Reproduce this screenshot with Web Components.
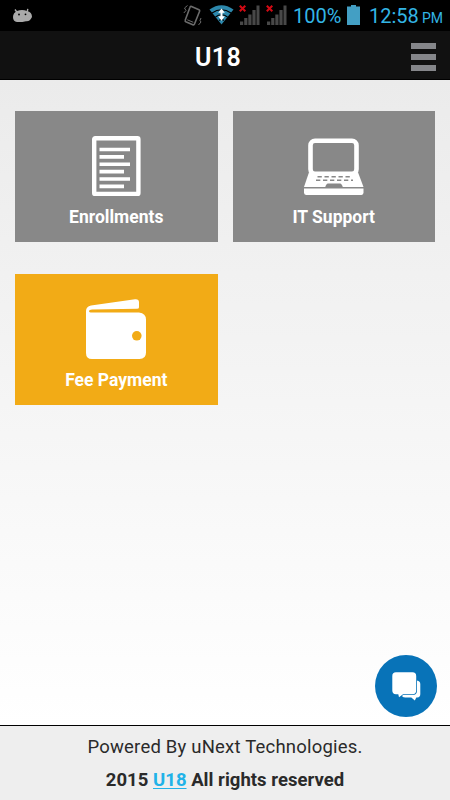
<!DOCTYPE html>
<html lang="en">
<head>
<meta charset="UTF-8">
<meta name="viewport" content="width=device-width, initial-scale=1.0">
<title>U18</title>
<style>
    body {
        margin: 0;
        font-family: Roboto, "Liberation Sans", sans-serif;
    }
</style>
</head>
<body>
<u18-app>
    <status-bar slot="top"></status-bar>
    <app-header slot="top">U18</app-header>
    <menu-tile>
        <svg slot="icon" width="62" height="62" viewBox="0 0 62 62" fill="none" stroke="#fff">
            <rect x="9.200" y="3.300" width="44.200" height="55.600" rx="1" stroke-width="4.400"/>
            <path stroke-width="3.600" d="M14.500 14.500h30.500M14.500 21.900h24.500M14.500 29.200h30.500M14.500 36.600h24.500M14.500 44h30.500M14.500 51.400h24.500"/>
        </svg>
        Enrollments
    </menu-tile>
    <menu-tile>
        <svg slot="icon" width="62" height="62" viewBox="0 0 62 62" fill="#fff">
            <rect x="7.500" y="5.800" width="46" height="33" rx="4.500" fill="none" stroke="#fff" stroke-width="4.600"/>
            <path d="M6 37.200h49L60.500 52H1z"/>
            <path d="M1 53.600h59.500v4q0 2.400-2 2.400H3q-2 0-2-2.400z"/>
            <path stroke="#888" stroke-width="1.500" stroke-dasharray="4.300 2.700" d="M14.500 41.700h33M13 45.200h37"/>
            <path fill="#888" d="M25 48.600h12q2 0 3 4.500H22q1-4.500 3-4.500z"/>
        </svg>
        IT Support
    </menu-tile>
    <menu-tile color="#f2ab16">
        <svg slot="icon" width="62" height="62" viewBox="0 0 62 62" fill="#fff">
            <path d="M1 16V13q0-4.500 5-5.600L50 1.200q4-.4 4 3v5q0 1.600-2 1.600L7 11.500q-3 .2-3 1.500 0 1.600 3 1.600h47q7 1 7 7V54.500q0 6.500-6.500 6.500H7Q1 61 1 55z"/>
            <circle cx="51.800" cy="37.800" r="4.800" fill="#f2ab16"/>
        </svg>
        Fee Payment
    </menu-tile>
    <chat-button slot="float"></chat-button>
    <app-footer slot="bottom" company="uNext Technologies">U18</app-footer>
</u18-app>

<script>
class U18App extends HTMLElement {
    constructor() {
        super();
        this.attachShadow({ mode: 'open' });
    }

    connectedCallback() {
        this.shadowRoot.innerHTML = `
            <style>
                :host {
                    display: flex;
                    flex-direction: column;
                    position: relative;
                    width: 450px;
                    height: 800px;
                    overflow: hidden;
                    background: #fff;
                }
                main {
                    flex: 1;
                    box-sizing: border-box;
                    padding: 31px 15px;
                    display: grid;
                    grid-template-columns: 202.500px 202.500px;
                    grid-auto-rows: 131px;
                    gap: 32px 15px;
                    align-content: start;
                    background: linear-gradient(#ebebeb, #fff);
                }
            </style>
            <slot name="top"></slot>
            <main><slot></slot></main>
            <slot name="float"></slot>
            <slot name="bottom"></slot>
        `;
    }
}

class StatusBar extends HTMLElement {
    constructor() {
        super();
        this.attachShadow({ mode: 'open' });
    }

    connectedCallback() {
        const signal = `
            <svg width="21" height="22" viewBox="0 0 21 22">
                <path fill="#484848" d="M1 17.500h3.200V21H1zM5.200 14h3.200v7H5.200zM9.300 10.500h3.200V21H9.300zM13.400 6h3.200v15h-3.200zM17.500 1.500H20.500V21h-3z"/>
                <path stroke="#d20a14" stroke-width="2" d="M.8 1.800l5.500 5.500M6.300 1.800L.8 7.300"/>
            </svg>`;
        this.shadowRoot.innerHTML = `
            <style>
                :host {
                    display: flex;
                    align-items: flex-start;
                    height: 31px;
                    box-sizing: border-box;
                    padding: 4px 8px 0 12px;
                    background: #000;
                    color: #33b5e5;
                    line-height: 25px;
                    white-space: nowrap;
                }
                svg { display: block; flex: none; }
                .robot { margin: 4px auto 0 0; }
                .vibrate { margin-right: 7px; }
                .wifi { margin-right: 5px; }
                .signals { display: flex; gap: 6px; margin-right: 6px; }
                .percent { width: 54px; font-size: 20px; }
                .battery { margin: 1px 9px 0 0; }
                .time { width: 53px; font-size: 20px; }
                .ampm { width: 20px; font-size: 14px; line-height: 28px; }
            </style>
            <svg class="robot" width="21" height="15" viewBox="0 0 21 15">
                <path fill="#aaa" d="M5 3Q10 .8 15 3Q20 4 20 9Q18 13.700 14 13.200Q9 14.400 5 14Q1 13.500 1 9Q1 5 5 3z"/>
                <path stroke="#aaa" stroke-width="1.400" d="M3 1.500L5.500 5M15.800.8L15.200 4"/>
                <circle cx="7" cy="6.500" r=".9"/><circle cx="13.500" cy="6.300" r=".9"/>
            </svg>
            <svg class="vibrate" width="19" height="23" viewBox="0 0 19 23" fill="none" stroke="#6c6c6c">
                <path stroke-width="1.600" d="M8.500 2.500l7.500 3.200q1 .5.600 1.500L11.500 20q-.5 1.200-1.700.7l-7-3q-1-.5-.6-1.500L7 3.300q.4-1.200 1.500-.8z"/>
                <path d="M4.300 15.800l6 2.500M4.500 1.500L1.500 4l1.500 2.500L.8 9M18 14l-1 2.500 1 1.500-2.500 3"/>
            </svg>
            <svg class="wifi" width="25" height="22" viewBox="0 0 25 22">
                <path fill="#2d88ac" d="M.5 5.500Q12.500-3 24.500 5.500L12.500 20.500z"/>
                <path fill="none" stroke="#000" stroke-width="1.100" d="M3 9q9.500-6.500 19 0M6.500 13q6-4.500 12 0M10 16.500q2.500-2 5 0"/>
                <path fill="#fff" d="M12.500 4.500l3.300 4.300h-2.300v3.400h2.300l-3.300 4.500-3.300-4.500h2.300V8.800H9.200z"/>
            </svg>
            <div class="signals">${signal}${signal}</div>
            <span class="percent">100%</span>
            <svg class="battery" width="13" height="20" viewBox="0 0 13 20" fill="#439fc4">
                <path d="M4 0h5v1.500h4V20H0V1.500h4z"/>
            </svg>
            <span class="time">12:58</span>
            <span class="ampm">PM</span>
        `;
    }
}

class AppHeader extends HTMLElement {
    constructor() {
        super();
        this.attachShadow({ mode: 'open' });
    }

    connectedCallback() {
        this.shadowRoot.innerHTML = `
            <style>
                :host {
                    display: grid;
                    grid-template-columns: 1fr auto 1fr;
                    align-items: center;
                    height: 49px;
                    box-sizing: border-box;
                    padding: 0 14px 0 0;
                    background: #111;
                    border-bottom: 1px solid #000;
                    color: #fff;
                }
                h1 {
                    grid-column: 2;
                    margin: 6px 0 0;
                    font-size: 25px;
                    line-height: 30px;
                    font-weight: 600;
                    letter-spacing: .4px;
                }
                .menu {
                    justify-self: end;
                    display: grid;
                    gap: 5px;
                    margin-top: 4px;
                }
                .menu i {
                    width: 25px;
                    height: 6px;
                    background: #85868a;
                }
            </style>
            <h1><slot></slot></h1>
            <div class="menu"><i></i><i></i><i></i></div>
        `;
    }
}

class MenuTile extends HTMLElement {
    constructor() {
        super();
        this.attachShadow({ mode: 'open' });
    }

    connectedCallback() {
        const color = this.getAttribute('color') || '#888';
        this.shadowRoot.innerHTML = `
            <style>
                :host {
                    display: flex;
                    flex-direction: column;
                    align-items: center;
                    box-sizing: border-box;
                    padding-top: 24px;
                    background: ${color};
                    color: #fff;
                }
                ::slotted(svg) { display: block; }
                .label {
                    margin-top: 9px;
                    font-size: 17.5px;
                    line-height: 22px;
                    font-weight: 700;
                }
            </style>
            <slot name="icon"></slot>
            <div class="label"><slot></slot></div>
        `;
    }
}

class ChatButton extends HTMLElement {
    constructor() {
        super();
        this.attachShadow({ mode: 'open' });
    }

    connectedCallback() {
        // floats over the page content
        this.shadowRoot.innerHTML = `
            <style>
                :host {
                    position: absolute;
                    right: 13px;
                    bottom: 83px;
                    display: grid;
                    place-items: center;
                    width: 62px;
                    height: 62px;
                    border-radius: 50%;
                    background: #0873b8;
                }
            </style>
            <svg width="62" height="62" viewBox="0 0 62 62" fill="#fff">
                <path d="M27 36h14V25.500q4.300.3 4.300 3.500v10q0 3.200-3 3.500h-1l-1.500 3-3.500-3h-6q-3.300 0-3.300-2.500z"/>
                <path stroke="#0873b8" stroke-width="1.600" paint-order="stroke" d="M21 17.300h16.500q3.700 0 3.700 3.700v14.500q0 3.700-3.700 3.700H28l-4 3-.7-3H21q-3.700 0-3.700-3.700V21q0-3.700 3.700-3.700z"/>
            </svg>
        `;
    }
}

class AppFooter extends HTMLElement {
    constructor() {
        super();
        this.attachShadow({ mode: 'open' });
    }

    connectedCallback() {
        const company = this.getAttribute('company');
        this.shadowRoot.innerHTML = `
            <style>
                :host {
                    display: block;
                    height: 75px;
                    box-sizing: border-box;
                    padding-top: 8px;
                    border-top: 1px solid #000;
                    background: #eee;
                    color: #2a2a2a;
                    text-align: center;
                    white-space: nowrap;
                }
                p {
                    margin: 0;
                    font-size: 18.5px;
                    line-height: 27px;
                    letter-spacing: .2px;
                }
                .rights {
                    margin-top: 6px;
                    font-weight: 700;
                    font-size: 18.5px;
                    letter-spacing: .03px;
                }
                a {
                    color: #21b2e8;
                    text-decoration: underline;
                    text-decoration-thickness: 1px;
                    text-underline-offset: 2px;
                }
            </style>
            <p>Powered By ${company}.</p>
            <p class="rights">2015 <a><slot></slot></a> All rights reserved</p>
        `;
    }
}

customElements.define('u18-app', U18App);
customElements.define('status-bar', StatusBar);
customElements.define('app-header', AppHeader);
customElements.define('menu-tile', MenuTile);
customElements.define('chat-button', ChatButton);
customElements.define('app-footer', AppFooter);
</script>
</body>
</html>
